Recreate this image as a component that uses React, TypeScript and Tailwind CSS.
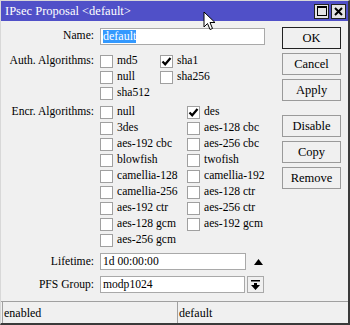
import type { ReactNode } from "react";

const serif = { fontFamily: '"Liberation Serif", "DejaVu Serif", serif' };

function Check({ on }: { on?: boolean }) {
  return (
    <span className="flex h-[13px] w-[13px] shrink-0 items-center justify-center border border-[#a0a0a0] bg-white">
      {on && (
        <svg width="11" height="11" viewBox="0 0 11 11">
          <path d="M1.5 5.5 L4.2 8.3 L9.5 2" fill="none" stroke="#000" strokeWidth="2.2" />
        </svg>
      )}
    </span>
  );
}

function Box({ label, on, w }: { label: string; on?: boolean; w: string }) {
  return (
    <div className={`flex h-4 items-center gap-[4px] ${w}`}>
      <Check on={on} />
      <span className="leading-none">{label}</span>
    </div>
  );
}

function Row({ label, children, className = "" }: { label: string; children: ReactNode; className?: string }) {
  return (
    <div className={`flex ${className}`}>
      <div className="w-[94px] shrink-0 pr-[1px] text-right leading-4">{label}</div>
      <div className="ml-[5px]">{children}</div>
    </div>
  );
}

function Btn({ label, def }: { label: string; def?: boolean }) {
  return (
    <button
      type="button"
      className={`h-[22px] w-[59px] border bg-[#f0f0f0] text-[12.5px] ${def ? "border-[#222]" : "border-[#9a9a9a]"}`}
    >
      {label}
    </button>
  );
}

const encr: [string, string?][] = [
  ["null", "des"],
  ["3des", "aes-128 cbc"],
  ["aes-192 cbc", "aes-256 cbc"],
  ["blowfish", "twofish"],
  ["camellia-128", "camellia-192"],
  ["camellia-256", "aes-128 ctr"],
  ["aes-192 ctr", "aes-256 ctr"],
  ["aes-128 gcm", "aes-192 gcm"],
  ["aes-256 gcm"],
];

export default function App() {
  return (
    <div
      className="relative flex h-[325px] w-[350px] flex-col border-b-2 border-l border-r-2 border-t border-b-[#3a3a3a] border-l-[#d8d8d8] border-r-[#3a3a3a] border-t-[#d8d8d8] bg-[#f0f0f0] text-[11.6px] text-black"
      style={serif}
    >
      <div className="flex h-[20px] shrink-0 items-center justify-between bg-[#5050c8] pl-[4px] pr-[2px] text-white">
        <span className="text-[12.5px]">IPsec Proposal &lt;default&gt;</span>
        <div className="flex gap-[2px]">
          <span className="flex h-[15px] w-[15px] items-center justify-center border border-[#222] bg-[#e4e4e4]">
            <span className="h-[10px] w-[10px] border border-black border-t-2" />
          </span>
          <span className="flex h-[15px] w-[15px] items-center justify-center border border-[#222] bg-[#e4e4e4]">
            <svg width="9" height="9" viewBox="0 0 9 9">
              <path d="M1 1 L8 8 M8 1 L1 8" stroke="#000" strokeWidth="2" />
            </svg>
          </span>
        </div>
      </div>

      <div className="flex flex-1">
        <div className="flex flex-1 flex-col pt-[7px]">
          <Row label="Name:">
            <div className="flex h-[17px] w-[165px] items-center border border-[#a9a9a9] bg-white px-[2px] text-[12px]">
              <span className="bg-[#3399ff] leading-[13px] text-white">default</span>
            </div>
          </Row>

          <Row label="Auth. Algorithms:" className="mt-[8px]">
            <div className="flex flex-col">
              <div className="flex">
                <Box label="md5" w="w-[60px]" />
                <Box label="sha1" on w="w-[80px]" />
              </div>
              <div className="flex">
                <Box label="null" w="w-[60px]" />
                <Box label="sha256" w="w-[80px]" />
              </div>
              <Box label="sha512" w="w-[60px]" />
            </div>
          </Row>

          <Row label="Encr. Algorithms:" className="mt-[3px]">
            <div className="flex flex-col">
              {encr.map(([a, b]) => (
                <div key={a} className="flex">
                  <Box label={a} w="w-[87px]" />
                  {b && <Box label={b} on={b === "des"} w="w-[90px]" />}
                </div>
              ))}
            </div>
          </Row>

          <Row label="Lifetime:" className="mt-[5px] items-center">
            <div className="flex items-center">
              <div className="flex h-[17px] w-[146px] items-center border border-[#a9a9a9] bg-white px-[2px]">
                1d 00:00:00
              </div>
              <svg width="9" height="6" viewBox="0 0 9 6" className="ml-[8px]">
                <path d="M0 6 L4.5 0 L9 6 Z" fill="#000" />
              </svg>
            </div>
          </Row>

          <Row label="PFS Group:" className="mt-[6px] items-center">
            <div className="flex items-center">
              <div className="flex h-[17px] w-[145px] items-center border border-[#a9a9a9] bg-white px-[2px]">
                modp1024
              </div>
              <span className="ml-[2px] flex h-[17px] w-[17px] items-center justify-center border border-[#a9a9a9] bg-[#f0f0f0]">
                <svg width="9" height="10" viewBox="0 0 9 10">
                  <path d="M0 0 H9 V1.5 H0 Z M3 3 H6 V5 H9 L4.5 10 L0 5 H3 Z" fill="#000" />
                </svg>
              </span>
            </div>
          </Row>
        </div>

        <div className="flex w-[66px] flex-col gap-[4px] pt-[6px]">
          <Btn label="OK" def />
          <Btn label="Cancel" />
          <Btn label="Apply" />
          <div className="h-[6px]" />
          <Btn label="Disable" />
          <Btn label="Copy" />
          <Btn label="Remove" />
        </div>
      </div>

      <div className="flex h-[22px] shrink-0 gap-[3px] border-t border-[#a0a0a0] px-[1px] text-[12px]">
        <div className="flex w-[172px] items-center border-l border-[#a0a0a0] pl-[1px]">enabled</div>
        <div className="flex flex-1 items-center border-l border-[#a0a0a0] pl-[1px]">default</div>
      </div>

      <svg
        width="14"
        height="21"
        viewBox="0 0 14 21"
        className="absolute left-[202px] top-[10px]"
      >
        <path d="M1 1 V16 L4.5 12.5 L7 18.5 L9.5 17.5 L7 11.5 H12 Z" fill="#fff" stroke="#000" strokeWidth="1" />
      </svg>
    </div>
  );
}
